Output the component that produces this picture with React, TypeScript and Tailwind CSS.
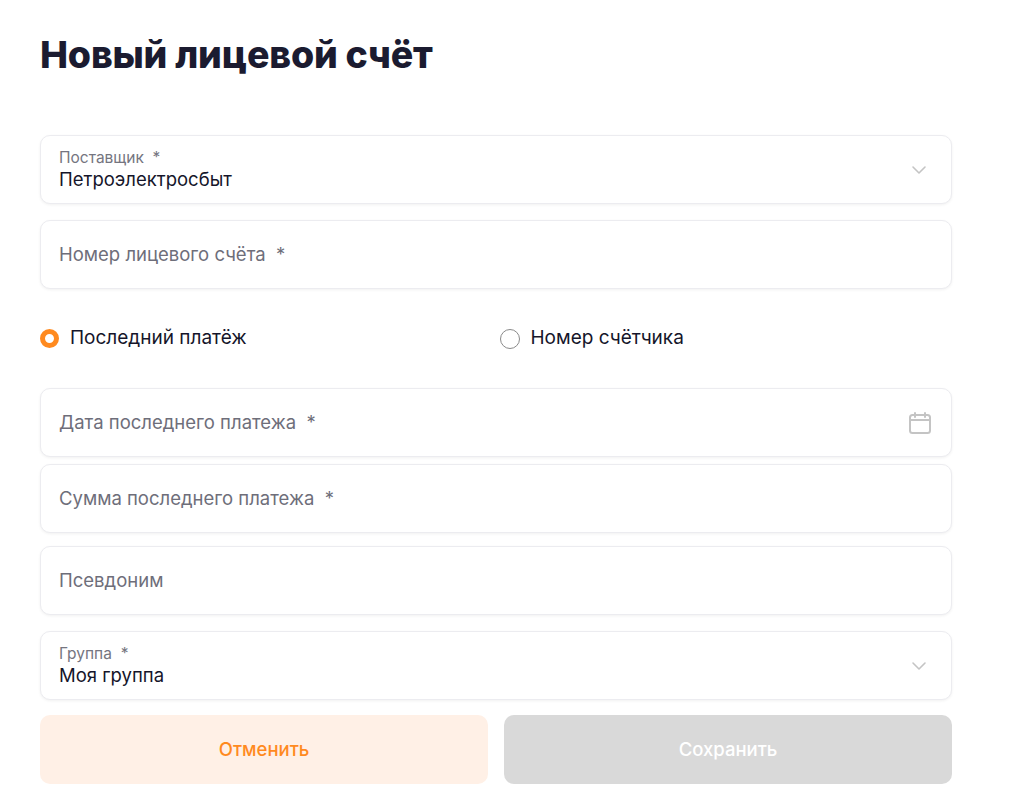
import React from "react";

const Chevron = () => (
  <svg width="20" height="20" viewBox="0 0 20 20" fill="none" stroke="#c4c4c4" strokeWidth="1.6" strokeLinecap="round" strokeLinejoin="round"><path d="M4 7l6 6 6-6" /></svg>
);
const Cal = () => (
  <svg width="26" height="26" viewBox="0 0 26 26" fill="none" stroke="#c4c4c4" strokeWidth="2" strokeLinecap="round"><rect x="3" y="5" width="20" height="18" rx="2.5" /><path d="M3 10h20M8 3v4M18 3v4" /></svg>
);

const box = "h-[69px] rounded-[10px] border border-[#ececf0] bg-white shadow-[0_1px_3px_rgba(0,0,0,0.06)] flex items-center px-[18px]";

function Select({ label, value }: { label: string; value: string }) {
  return (
    <div className={box}>
      <div className="flex-1 flex flex-col">
        <span className="text-[15.5px] leading-[19px] text-[#757580]">{label}{"\u00a0\u00a0*"}</span>
        <span className="text-[18.5px] leading-[25px] text-[#15152a]">{value}</span>
      </div>
      <div className="mr-1"><Chevron /></div>
    </div>
  );
}
function Input({ label, icon }: { label: string; icon?: React.ReactNode }) {
  return (
    <div className={box}>
      <span className="flex-1 text-[18.5px] text-[#6e6e7a]">{label}</span>
      {icon}
    </div>
  );
}

export default function App() {
  return (
    <div className="min-h-screen bg-white" style={{ fontFamily: "Inter, 'Noto Sans', sans-serif" }}>
      <div className="w-[912px] ml-[40px] pt-[32px]">
        <h1 className="text-[37.5px] font-extrabold leading-[46px] text-[#1b1b30] tracking-[-0.2px]">Новый лицевой счёт</h1>
        <div className="mt-[57px] flex flex-col">
          <Select label="Поставщик" value="Петроэлектросбыт" />
          <div className="mt-[16px]"><Input label={"Номер лицевого счёта\u00a0\u00a0*"} /></div>
          <div className="h-[99px] flex items-center">
            <div className="flex-1 flex items-center gap-[11px]">
              <span className="w-[19px] h-[19px] rounded-full border-[5px] border-[#ff8a1f]" />
              <span className="text-[19px] text-[#15152a]">Последний платёж</span>
            </div>
            <div className="flex-1 flex items-center gap-[11px] pl-[7px]">
              <span className="w-[20px] h-[20px] rounded-full border border-[#8a8a8a]" />
              <span className="text-[19px] text-[#15152a]">Номер счётчика</span>
            </div>
          </div>
          <Input label={"Дата последнего платежа\u00a0\u00a0*"} icon={<Cal />} />
          <div className="mt-[7px]"><Input label={"Сумма последнего платежа\u00a0\u00a0*"} /></div>
          <div className="mt-[13px]"><Input label="Псевдоним" /></div>
          <div className="mt-[16px]"><Select label="Группа" value="Моя группа" /></div>
          <div className="mt-[15px] flex gap-[16px]">
            <button className="flex-1 h-[69px] rounded-[10px] bg-[#fff0e6] text-[#ff8a1f] text-[18.5px] font-medium">Отменить</button>
            <button className="flex-1 h-[69px] rounded-[10px] bg-[#d9d9d9] text-white text-[18.5px] font-medium">Сохранить</button>
          </div>
        </div>
      </div>
    </div>
  );
}
